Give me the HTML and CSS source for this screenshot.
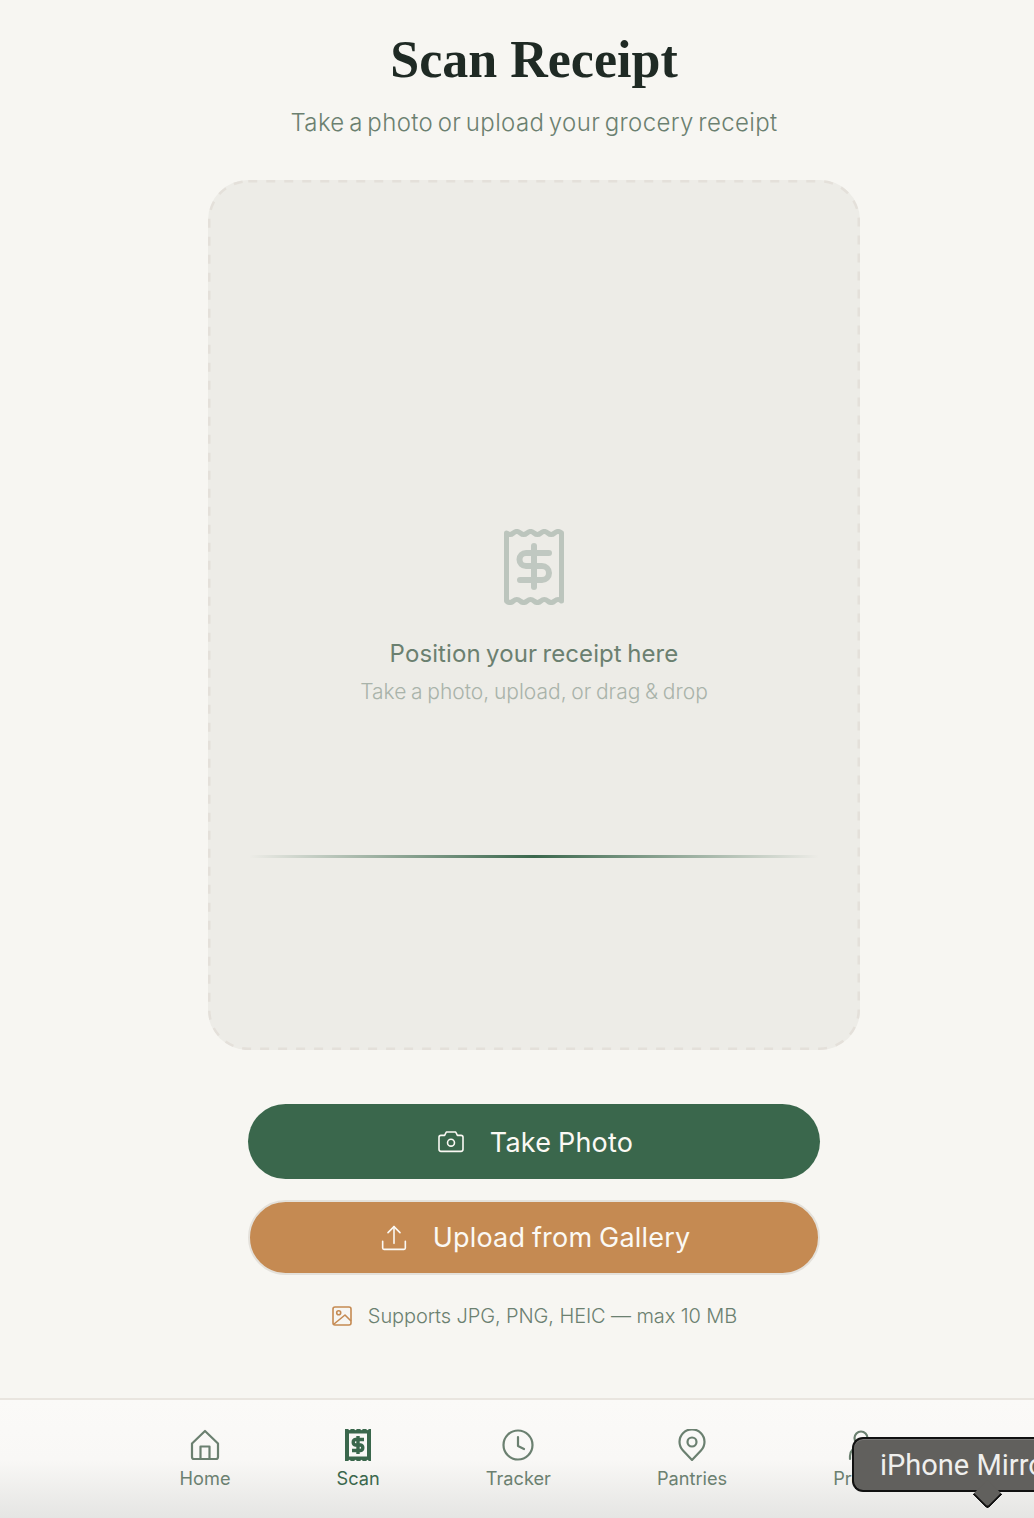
FILE: index.html
```html
<!DOCTYPE html>
<html lang="en">
<head>
  <meta charset="UTF-8">
  <meta name="viewport" content="width=device-width, initial-scale=1.0">
  <title>Scan Receipt</title>
  <link rel="stylesheet" href="styles.css">
</head>
<body>
  <main class="page">
    <h1>Scan Receipt</h1>
    <p class="subtitle">Take a photo or upload your grocery receipt</p>

    <div class="dropzone">
      <svg class="dash-frame" width="652" height="870" viewBox="0 0 652 870" fill="none">
        <rect x="1.250" y="1.250" width="649.500" height="867.500" rx="39" stroke="#e4e0da" stroke-width="2.500" stroke-dasharray="9 9"/>
      </svg>
      <svg class="receipt-icon" width="62" height="76" viewBox="0 0 62 76" fill="none" stroke="#bcc5bd" stroke-width="5" stroke-linecap="round" stroke-linejoin="round">
        <path d="M3.500 4q3.440 3 6.875 0t6.875 0 6.875 0 6.875 0 6.875 0 6.875 0 6.875 0 6.875 0V72q-3.440-3-6.875 0t-6.875 0-6.875 0-6.875 0-6.875 0-6.875 0-6.875 0-6.875 0z"/>
        <g stroke-width="6" opacity="0.9">
          <path d="M46 24H23a6.500 6.500 0 0 0 0 13h16a7 7 0 0 1 0 14H17"/>
          <path d="M31 17v41"/>
        </g>
      </svg>
      <div class="drop-title">Position your receipt here</div>
      <div class="drop-hint">Take a photo, upload, or drag &amp; drop</div>
      <div class="scan-line"></div>
    </div>

    <div class="actions">
      <button class="btn btn-photo">
        <svg width="32" height="32" viewBox="0 0 24 24" fill="none" stroke="currentColor" stroke-width="1.200" stroke-linecap="round" stroke-linejoin="round">
          <path d="M3 8.500a1.500 1.500 0 0 1 1.500-1.500h2.700l1.300-2.500h7l1.300 2.500h2.700a1.500 1.500 0 0 1 1.500 1.500v9a1.500 1.500 0 0 1-1.500 1.500h-15a1.500 1.500 0 0 1-1.500-1.500z"/>
          <circle cx="12" cy="12.500" r="2.600"/>
        </svg>
        <span class="btn-label">Take Photo</span>
      </button>
      <button class="btn btn-upload">
        <svg width="32" height="32" viewBox="0 0 24 24" fill="none" stroke="currentColor" stroke-width="1.200" stroke-linecap="round" stroke-linejoin="round">
          <path d="M3.500 14.500v5a1 1 0 0 0 1 1h15a1 1 0 0 0 1-1v-5"/>
          <path d="M12 16V3.500"/>
          <path d="M7.500 8 12 3.500 16.500 8"/>
        </svg>
        Upload from Gallery
      </button>
    </div>

    <div class="supports">
      <svg width="22" height="22" viewBox="0 0 22 22" fill="none" stroke="#c58a52" stroke-width="1.600" stroke-linejoin="round">
        <rect x="2" y="2" width="18" height="18" rx="2"/>
        <circle cx="7.700" cy="7.700" r="2"/>
        <path d="M3 19l11-9 6 6"/>
      </svg>
      <span>Supports JPG, PNG, HEIC — max 10 MB</span>
    </div>
  </main>

  <nav class="tabbar">
    <a class="tab">
      <svg width="32" height="32" viewBox="0 0 32 32" fill="none" stroke="currentColor" stroke-width="2.200" stroke-linecap="round" stroke-linejoin="round">
        <path d="M3 14.500 16 2l13 12.500V28a2 2 0 0 1-2 2H5a2 2 0 0 1-2-2z"/>
        <path d="M11.500 30V17.500h9V30"/>
      </svg>
      Home
    </a>
    <a class="tab tab-active">
      <svg width="32" height="32" viewBox="0 0 32 32">
        <path fill="#3a674c" d="M3 0h3l1.500 1.200L9 0h3l1.500 1.200L15 0h3l1.500 1.200L21 0h3l1.500 1.200L27 0h2v32h-2l-1.500-1.200L24 32h-3l-1.500-1.200L18 32h-3l-1.500-1.200L12 32H9l-1.500-1.200L6 32H3z"/>
        <rect x="7" y="4.500" width="18" height="23" fill="#f9f8f6"/>
        <path fill="none" stroke="#3a674c" stroke-width="3.400" d="M22 10.500h-8.500a2.800 2.800 0 0 0 0 5.500h5a2.800 2.800 0 0 1 0 5.500H10M16 7v18"/>
      </svg>
      Scan
    </a>
    <a class="tab">
      <svg width="32" height="32" viewBox="0 0 32 32" fill="none" stroke="currentColor" stroke-width="2.200" stroke-linecap="round" stroke-linejoin="round">
        <circle cx="16" cy="16" r="14.500"/>
        <path d="M16 8v9l6 3"/>
      </svg>
      Tracker
    </a>
    <a class="tab">
      <svg width="32" height="32" viewBox="0 0 32 32" fill="none" stroke="currentColor" stroke-width="2.200" stroke-linecap="round" stroke-linejoin="round">
        <path d="M16 31 7 21.500a12.500 12.500 0 1 1 18 0z"/>
        <circle cx="16" cy="13" r="4.500"/>
      </svg>
      Pantries
    </a>
    <a class="tab">
      <svg width="32" height="32" viewBox="0 0 32 32" fill="none" stroke="currentColor" stroke-width="2.200" stroke-linecap="round" stroke-linejoin="round">
        <circle cx="16" cy="9" r="6.500"/>
        <path d="M5 30v-3a9 9 0 0 1 9-9h4a9 9 0 0 1 9 9v3"/>
      </svg>
      Profile
    </a>
  </nav>

  <div class="mirror-tip"><span class="mirror-label">iPhone Mirroring</span></div>
</body>
</html>
```

FILE: styles.css
```css
html, body {
  height: 100%;
}
body {
  margin: 0;
  width: 1034px;
  height: 1518px;
  overflow: hidden;
  position: relative;
  display: flex;
  flex-direction: column;
  background: #f7f6f2;
  color: #1f2a24;
  font-family: 'Inter', 'Liberation Sans', sans-serif;
}
.page {
  flex: 1;
  display: flex;
  flex-direction: column;
  align-items: center;
  padding: 30px 0 0 34px;
}
h1 {
  margin: 0;
  font-family: 'Liberation Serif', serif;
  font-size: 52px;
  line-height: 60px;
  font-weight: bold;
  color: #1f2a24;
}
.subtitle {
  margin: 18px 0 0;
  font-size: 24px;
  line-height: 30px;
  letter-spacing: 0.35px;
  word-spacing: -2.500px;
  color: #6b8070;
  font-weight: 300;
}
.dropzone {
  position: relative;
  box-sizing: border-box;
  width: 652px;
  height: 870px;
  margin-top: 42px;
  padding-top: 349px;
  display: flex;
  flex-direction: column;
  align-items: center;
  background: #edece7;
  border-radius: 40px;
}
.dash-frame {
  position: absolute;
  left: 0;
  top: 0;
}
.drop-title {
  margin-top: 33px;
  font-size: 24px;
  line-height: 32px;
  letter-spacing: 0.1px;
  word-spacing: -1.500px;
  color: #6b8070;
}
.drop-hint {
  margin-top: 10px;
  font-size: 21px;
  line-height: 24px;
  word-spacing: -1.200px;
  color: #a9b3aa;
  font-weight: 300;
}
.scan-line {
  position: absolute;
  left: 41px;
  right: 41px;
  top: 675px;
  height: 3px;
  background: linear-gradient(90deg, transparent, #3a674c 50%, transparent);
}
.actions {
  display: flex;
  flex-direction: column;
  gap: 21px;
  margin-top: 54px;
}
.btn {
  box-sizing: border-box;
  width: 572px;
  height: 75px;
  display: flex;
  align-items: center;
  justify-content: center;
  gap: 23px;
  border: none;
  border-radius: 38px;
  color: #fbf9f4;
  font-family: inherit;
  font-size: 27px;
  letter-spacing: 0.2px;
  word-spacing: -1px;
}
.btn-label {
  padding-top: 2px;
}
.btn-photo {
  background: #3a674c;
}
.btn-upload {
  background: #c58a52;
  border: 2px solid #e4e1db;
}
.supports {
  display: flex;
  align-items: center;
  gap: 15px;
  margin-top: 28px;
  font-size: 20px;
  line-height: 26px;
  letter-spacing: -0.1px;
  font-weight: 300;
  color: #6b8070;
}
.tabbar {
  box-sizing: border-box;
  height: 120px;
  padding: 29px 0 0 34px;
  display: flex;
  justify-content: center;
  gap: 106px;
  background: linear-gradient(180deg, #fbfaf8 0%, #f9f8f6 50%, #e5e5e3 100%);
  border-top: 2px solid #e9e5df;
}
.tab {
  display: flex;
  flex-direction: column;
  align-items: center;
  gap: 5px;
  font-size: 18.200px;
  line-height: 24px;
  color: #6b8070;
}
.tab-active {
  color: #3a674c;
}
.mirror-tip {
  position: absolute;
  left: 852px;
  top: 1437px;
  box-sizing: border-box;
  width: 182px;
  height: 55px;
  padding-left: 26px;
  line-height: 52px;
  font-family: 'Roboto', 'Liberation Sans', sans-serif;
  font-size: 29px;
  color: #efefed;
  background: #61605d;
  border: 2px solid #111;
  border-right: none;
  border-radius: 11px 0 0 11px;
  box-shadow: inset 0 1px 0 #7a7977;
}
.mirror-label {
  display: block;
  overflow: hidden;
  white-space: nowrap;
}
.mirror-tip::after {
  content: '';
  position: absolute;
  left: 123px;
  bottom: -15px;
  width: 19px;
  height: 19px;
  background: #61605d;
  border-right: 2px solid #111;
  border-bottom: 2px solid #111;
  border-radius: 0 0 4px 0;
  transform: rotate(45deg);
}
```
